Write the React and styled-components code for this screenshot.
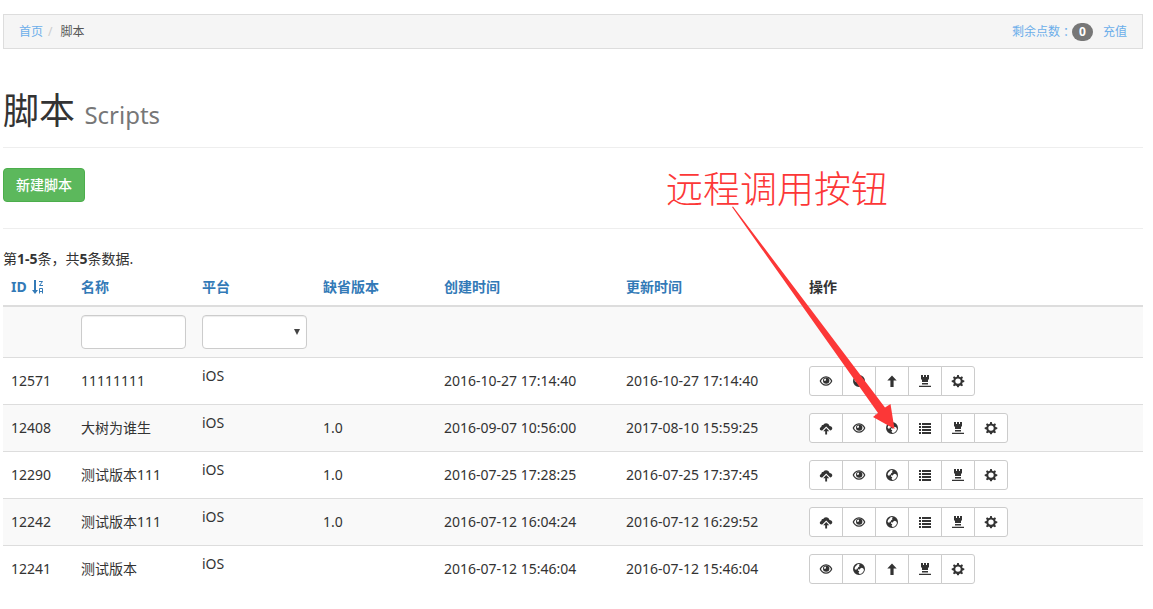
import React, { useState } from 'react';
import styled, { createGlobalStyle } from 'styled-components';

const GlobalStyle = createGlobalStyle`
  * {
    box-sizing: border-box;
  }

  body {
    margin: 0;
    background: #fff;
    color: #333;
    font-family: 'Noto Sans', 'Noto Sans CJK SC', sans-serif;
    font-size: 14px;
    line-height: 20px;
  }

  a {
    color: #337ab7;
    text-decoration: none;
  }

  button, input, select {
    font-family: inherit;
    font-size: inherit;
    line-height: inherit;
  }
`;

const Page = styled.div`
  position: relative;
  padding: 14px 10px 20px 3px;
`;

const TopBar = styled.nav`
  display: flex;
  justify-content: space-between;
  align-items: center;
  height: 35px;
  padding: 0 15px;
  border: 1px solid #ddd;
  background: #f5f5f5;
  color: #555;
  font-size: 12px;

  a {
    color: #6caeea;
  }
`;

const Breadcrumb = styled.ol`
  display: flex;
  margin: 0;
  padding: 0;
  list-style: none;

  li + li::before {
    content: '/\\00a0';
    padding: 0 5px;
    color: #ccc;
  }
`;

const Account = styled.div`
  display: flex;
  align-items: center;
  gap: 10px;
`;

const Points = styled.a`
  display: flex;
  align-items: center;
`;

// full-width punctuation centred in its cell
const Punct = styled.span`
  font-family: 'Noto Sans CJK TC', sans-serif;
`;

const Badge = styled.span`
  min-width: 21px;
  padding: 3px 7px;
  border-radius: 10px;
  background: #777;
  color: #fff;
  font-weight: 700;
  line-height: 12px;
  text-align: center;
`;

const PageHeader = styled.header`
  margin: 42px 0 20px;
  padding-bottom: 17px;
  border-bottom: 1px solid #eee;
`;

const Title = styled.h1`
  margin: 0;
  font-size: 36px;
  font-weight: 400;
  line-height: 39px;

  small {
    color: #777;
    font-size: 24px;
    line-height: 24px;
  }
`;

const CreateButton = styled.button`
  display: block;
  height: 34px;
  padding: 0 11px;
  border: 1px solid #4cae4c;
  border-radius: 4px;
  background: #5cb85c;
  color: #fff;
  font-weight: 500;
  min-width: 82px;
  cursor: pointer;

  &:hover {
    background: #449d44;
  }
`;

const Divider = styled.hr`
  margin: 26px 0 20px;
  border: 0;
  border-top: 1px solid #eee;
`;

const Summary = styled.div`
  height: 20px;
`;

const Table = styled.table`
  width: 100%;
  table-layout: fixed;
  border-spacing: 0;
`;

const Col = styled.col`
  width: ${({ $width }) => $width};
`;

const Th = styled.th`
  padding: 8px;
  border-bottom: 2px solid #ddd;
  text-align: left;
  white-space: nowrap;
`;

const Row = styled.tr`
  background: ${({ $striped }) => ($striped ? '#f9f9f9' : '#fff')};
`;

const Td = styled.td`
  padding: 8px;
  border-top: ${({ $first }) => ($first ? '0' : '1px solid #ddd')};
  vertical-align: ${({ $top }) => ($top ? 'top' : 'middle')};
  white-space: nowrap;
`;

const SortLink = styled.a`
  display: inline-flex;
  align-items: center;
  gap: 4px;
`;

const Field = styled.input`
  display: block;
  width: 100%;
  height: 34px;
  padding: 6px 12px;
  border: 1px solid #ccc;
  border-radius: 4px;
  background: #fff;
  box-shadow: inset 0 1px 1px rgba(0, 0, 0, 0.075);
`;

const SelectWrap = styled.div`
  display: grid;
  align-items: center;

  > * {
    grid-area: 1 / 1;
  }

  svg {
    justify-self: end;
    margin-right: 7px;
    pointer-events: none;
  }
`;

const Select = styled(Field)`
  appearance: none;
`;

const ButtonGroup = styled.div`
  display: flex;
`;

const IconButton = styled.button`
  display: flex;
  align-items: center;
  justify-content: center;
  width: 34px;
  height: 30px;
  padding: 0;
  border: 1px solid #ccc;
  background: #fff;
  color: #333;
  cursor: pointer;

  & + & {
    margin-left: -1px;
  }

  &:first-child {
    border-radius: 3px 0 0 3px;
  }

  &:last-child {
    border-radius: 0 3px 3px 0;
  }

  &:hover {
    background: #e6e6e6;
  }
`;

// callout drawn over the page
const Callout = styled.div`
  position: absolute;
  top: 165px;
  left: 666px;
  color: #fc3737;
  font-family: 'Noto Sans CJK SC', sans-serif;
  font-size: 37px;
  font-weight: 300;
  line-height: 44px;
  white-space: nowrap;
  pointer-events: none;
`;

const Arrow = styled.svg`
  position: absolute;
  top: 206px;
  left: 732px;
  pointer-events: none;
`;

const icons = {
  upload: (
    <>
      <path d="M1.500 8.500C.5 8.400-.2 7.600-.2 6.700c0-.9.6-1.600 1.500-1.800C1.300 3.700 2.200 3 3.200 3.100 3.600 2 4.700 1.200 6 1.200c1.800 0 3.200 1.200 3.500 2.800 1.700 0 2.800 1 2.800 2.300 0 1.200-.9 2.100-2.100 2.200L6.200 4.400 2.200 8.500z" />
      <path d="M6.200 6l3 3.200H7.100V12.500H5.200V9.200H3.200z" />
    </>
  ),
  eye: (
    <>
      <path
        fillRule="evenodd"
        d="M6 1.200c3.200 0 5.400 2.200 6.400 4.800-1 2.600-3.200 4.800-6.400 4.800S.6 8.600-.4 6C.6 3.400 2.800 1.200 6 1.200zM6 2.400C3.600 2.400 1.900 4 1 6c.9 2 2.600 3.500 5 3.500S10.100 8 11 6C10.100 4 8.400 2.400 6 2.400z"
      />
      <path
        fillRule="evenodd"
        d="M6.200 2.400a3.200 3.200 0 1 1 0 6.400 3.200 3.200 0 0 1 0-6.400zM5.200 3.600c-.9.400-1.300 1.200-1.100 2 .6.500 1.400.3 1.800-.3.300-.7.100-1.400-.7-1.700z"
      />
    </>
  ),
  globe: (
    <path
      fillRule="evenodd"
      d="M6 0a6 6 0 1 1 0 12A6 6 0 0 1 6 0zM4.600 1.300L6 1.100l.9.9-1 .6.600.9-1.400.8-.2 1.200-1.300.2-.3 1.200L1.600 5.900l.4-2zM7.600 5.300l1.300-.5 1.400.7.700 1.400-.9 2.100-1.900 1.700-1.700.4-1-1.300.8-1.500-1.400-.9.200-1.200 1.600.2z"
    />
  ),
  arrowUp: <path d="M6 .4l4.700 5.100H7.600V12H4.400V5.500H1.300z" />,
  list: (
    <path d="M0 1h2v2H0zM3 1h9v2H3zM0 4h2v2H0zM3 4h9v2H3zM0 7h2v2H0zM3 7h9v2H3zM0 10h2v2H0zM3 10h9v2H3z" />
  ),
  tower: (
    <path d="M2 0h2v2h1V0h2v2h1V0h2v4L9 5v2H3V5L2 4zM3 8h6v1.500H3zM0 10.700h12V12H0z" />
  ),
  cog: (
    <path
      fillRule="evenodd"
      d="M5.200 0h1.600l.4 1.700 1.200.5 1.500-.9 1.100 1.100-.9 1.500.5 1.200 1.700.4v1.600l-1.700.4-.5 1.200.9 1.500-1.100 1.100-1.500-.9-1.200.5-.4 1.400H5.200l-.4-1.400-1.200-.5-1.500.9L1 10.200l.9-1.500-.5-1.200-1.700-.4V5.500l1.700-.4.5-1.200L1 2.400l1.100-1.100 1.500.9 1.200-.5zM6 3.400a2.700 2.700 0 1 0 0 5.400 2.700 2.700 0 0 0 0-5.400z"
    />
  ),
};

const actions = {
  upload: '上传',
  eye: '查看',
  globe: '远程调用',
  arrowUp: '发布',
  list: '版本列表',
  tower: '授权',
  cog: '设置',
};

const Icon = ({ name }) => (
  <svg width="12" height="12" viewBox="0 0 12 12" fill="currentColor" overflow="visible" aria-hidden="true">
    {icons[name]}
  </svg>
);

const SortIcon = () => (
  <svg width="14" height="14" viewBox="0 0 14 14" fill="currentColor" aria-hidden="true">
    <path d="M3 0h2v10h2l-3 4-3-4h2z" />
    <path
      d="M8 1.500h3.500L8.500 5.500H12M8.500 13.500v-5h3v5M8.500 11.500h3"
      fill="none"
      stroke="currentColor"
      strokeWidth="1"
    />
  </svg>
);

const draftActions = ['eye', 'globe', 'arrowUp', 'tower', 'cog'];
const releasedActions = ['upload', 'eye', 'globe', 'list', 'tower', 'cog'];

const columns = [
  { label: 'ID', width: '70px', sorted: true },
  { label: '名称', width: '121px' },
  { label: '平台', width: '121px' },
  { label: '缺省版本', width: '121px' },
  { label: '创建时间', width: '182px' },
  { label: '更新时间', width: '183px' },
];

const scripts = [
  { id: 12571, name: '11111111', version: '', created: '2016-10-27 17:14:40', updated: '2016-10-27 17:14:40' },
  { id: 12408, name: '大树为谁生', version: '1.0', created: '2016-09-07 10:56:00', updated: '2017-08-10 15:59:25' },
  { id: 12290, name: '测试版本111', version: '1.0', created: '2016-07-25 17:28:25', updated: '2016-07-25 17:37:45' },
  { id: 12242, name: '测试版本111', version: '1.0', created: '2016-07-12 16:04:24', updated: '2016-07-12 16:29:52' },
  { id: 12241, name: '测试版本', version: '', created: '2016-07-12 15:46:04', updated: '2016-07-12 15:46:04' },
];

const FilterRow = () => {
  const [name, setName] = useState('');
  const [platform, setPlatform] = useState('');

  return (
    <Row $striped>
      <Td $first />
      <Td $first>
        <Field aria-label="名称" value={name} onChange={(e) => setName(e.target.value)} />
      </Td>
      <Td $first>
        <SelectWrap>
          <Select as="select" aria-label="平台" value={platform} onChange={(e) => setPlatform(e.target.value)}>
            <option value="" />
            <option value="ios">iOS</option>
          </Select>
          <svg width="6" height="6" viewBox="0 0 6 6" fill="#444" aria-hidden="true">
            <path d="M0 0h6L3 6z" />
          </svg>
        </SelectWrap>
      </Td>
      <Td $first />
      <Td $first />
      <Td $first />
      <Td $first />
    </Row>
  );
};

const ScriptRow = ({ script, striped }) => (
  <Row $striped={striped}>
    <Td>{script.id}</Td>
    <Td>{script.name}</Td>
    <Td $top>iOS</Td>
    <Td>{script.version}</Td>
    <Td>{script.created}</Td>
    <Td>{script.updated}</Td>
    <Td>
      <ButtonGroup>
        {(script.version ? releasedActions : draftActions).map((name) => (
          <IconButton key={name} type="button" aria-label={actions[name]}>
            <Icon name={name} />
          </IconButton>
        ))}
      </ButtonGroup>
    </Td>
  </Row>
);

const App = () => {
  return (
    <Page>
      <GlobalStyle />
      <TopBar>
        <Breadcrumb>
          <li><a href="#home">首页</a></li>
          <li>脚本</li>
        </Breadcrumb>
        <Account>
          <Points href="#points">剩余点数<Punct>：</Punct><Badge>0</Badge></Points>
          <a href="#recharge">充值</a>
        </Account>
      </TopBar>

      <PageHeader>
        <Title>脚本 <small>Scripts</small></Title>
      </PageHeader>
      <CreateButton type="button">新建脚本</CreateButton>
      <Divider />

      <Summary>第<b>1-5</b>条，共<b>5</b>条数据.</Summary>
      <Table>
        <colgroup>
          {columns.map((column) => <Col key={column.label} $width={column.width} />)}
          <Col $width="auto" />
        </colgroup>
        <thead>
          <tr>
            {columns.map((column) => (
              <Th key={column.label}>
                <SortLink href="#sort">
                  {column.label}
                  {column.sorted && <SortIcon />}
                </SortLink>
              </Th>
            ))}
            <Th>操作</Th>
          </tr>
        </thead>
        <tbody>
          <FilterRow />
          {scripts.map((script, i) => (
            <ScriptRow key={script.id} script={script} striped={i % 2 === 1} />
          ))}
        </tbody>
      </Table>

      <Callout>远程调用按钮</Callout>
      <Arrow width="164" height="224" viewBox="0 0 164 224" fill="#fc3737" aria-hidden="true">
        <path d="M0 1L1 .5 153 201.500 158.500 198 162.500 223 141 211 146 207z" />
      </Arrow>
    </Page>
  );
};

export default App;
